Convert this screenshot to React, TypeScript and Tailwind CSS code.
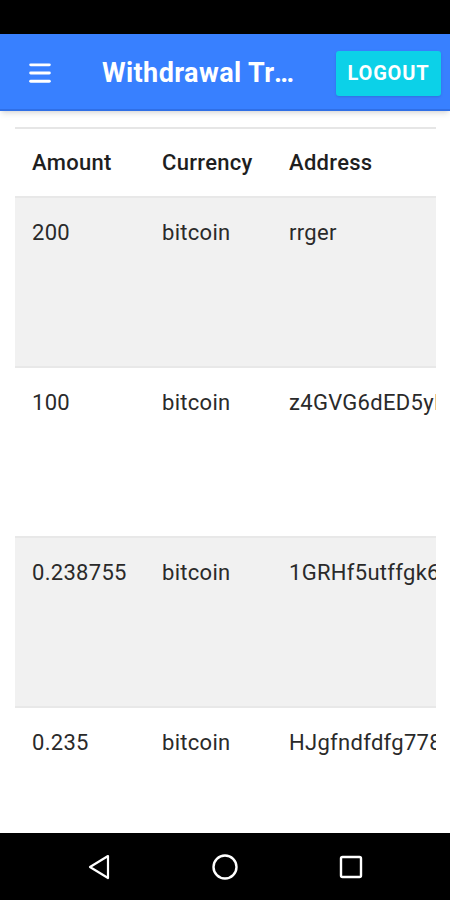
import { Menu } from "lucide-react";

type Withdrawal = {
  amount: string;
  currency: string;
  address: string;
};

const rows: Withdrawal[] = [
  { amount: "200", currency: "bitcoin", address: "rrger" },
  { amount: "100", currency: "bitcoin", address: "z4GVG6dED5yHs8kLq2" },
  { amount: "0.238755", currency: "bitcoin", address: "1GRHf5utffgk6Xc9Tm" },
  { amount: "0.235", currency: "bitcoin", address: "HJgfndfdfg778sdf3" },
];

export default function App() {
  return (
    <div className="flex h-[900px] w-[450px] flex-col overflow-hidden bg-white font-['Roboto',sans-serif]">
      <div className="h-[34px] shrink-0 bg-black" />

      <header className="flex h-[77px] shrink-0 items-center border-b-2 border-[#2f6fe6] bg-[#3880ff] pl-[26px] pr-[9px] shadow-md">
        <Menu className="mt-[2px] h-[28px] w-[28px] text-white" strokeWidth={2.5} />
        <h1 className="ml-[48px] mt-[3px] w-[204px] truncate text-[27px] font-bold tracking-[0.4px] text-white">
          Withdrawal Transactions
        </h1>
        <button className="ml-auto mt-[3px] flex h-[45px] w-[105px] items-center justify-center rounded-[3px] bg-[#0cd1e8] text-[20px] font-bold tracking-[0.8px] text-white shadow-sm">
          LOGOUT
        </button>
      </header>

      <main className="flex-1 overflow-hidden px-[15px] pt-[16px]">
        <div className="w-[421px] overflow-hidden border-t-2 border-[#e6e6e6]">
          <div className="grid h-[67px] grid-cols-[130px_127px_1fr] items-center pl-[17px] text-[22px] font-medium tracking-[0.3px] text-[#1f1f1f]">
            <span>Amount</span>
            <span>Currency</span>
            <span>Address</span>
          </div>
          {rows.map((r, i) => (
            <div
              key={i}
              className={`grid h-[170px] grid-cols-[130px_127px_1fr] border-t-2 border-[#e8e8e8] pl-[17px] pt-[18px] text-[22px] tracking-[0.3px] text-[#2a2a2a] ${
                i % 2 === 0 ? "bg-[#f1f1f1]" : "bg-white"
              }`}
            >
              <span>{r.amount}</span>
              <span>{r.currency}</span>
              <span className="overflow-hidden whitespace-nowrap">{r.address}</span>
            </div>
          ))}
        </div>
      </main>

      <nav className="flex h-[67px] shrink-0 items-center justify-center gap-[99px] bg-black">
        <svg width="26" height="28" viewBox="0 0 26 28" fill="none" stroke="white" strokeWidth="2.2" strokeLinejoin="round">
          <path d="M22 3 L4 14 L22 25 Z" />
        </svg>
        <svg width="28" height="28" viewBox="0 0 28 28" fill="none" stroke="white" strokeWidth="2.4">
          <circle cx="14" cy="14" r="11.5" />
        </svg>
        <svg width="26" height="26" viewBox="0 0 26 26" fill="none" stroke="white" strokeWidth="2.4">
          <rect x="3" y="3" width="20" height="20" rx="1.5" />
        </svg>
      </nav>
    </div>
  );
}
